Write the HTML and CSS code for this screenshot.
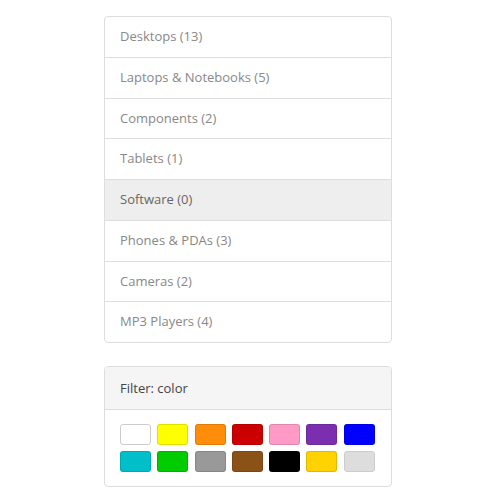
FILE: index.html
```html
<!DOCTYPE html>
<html lang="en">
<head>
    <meta charset="UTF-8">
    <meta name="viewport" content="width=device-width, initial-scale=1.0">
    <title>Categories</title>
    <link rel="stylesheet" href="styles.css">
</head>
<body>
    <div class="sidebar">
        <!-- categories -->
        <div class="list-group">
            <a href="#" class="list-group-item">Desktops (13)</a>
            <a href="#" class="list-group-item">Laptops &amp; Notebooks (5)</a>
            <a href="#" class="list-group-item">Components (2)</a>
            <a href="#" class="list-group-item">Tablets (1)</a>
            <a href="#" class="list-group-item active">Software (0)</a>
            <a href="#" class="list-group-item">Phones &amp; PDAs (3)</a>
            <a href="#" class="list-group-item">Cameras (2)</a>
            <a href="#" class="list-group-item">MP3 Players (4)</a>
        </div>

        <!-- color filter -->
        <div class="panel">
            <div class="panel-heading">Filter: color</div>
            <div class="panel-body">
                <div class="swatches">
                    <span class="swatch white" title="White"></span>
                    <span class="swatch yellow" title="Yellow"></span>
                    <span class="swatch orange" title="Orange"></span>
                    <span class="swatch red" title="Red"></span>
                    <span class="swatch pink" title="Pink"></span>
                    <span class="swatch purple" title="Purple"></span>
                    <span class="swatch blue" title="Blue"></span>
                    <span class="swatch cyan" title="Cyan"></span>
                    <span class="swatch green" title="Green"></span>
                    <span class="swatch gray" title="Gray"></span>
                    <span class="swatch brown" title="Brown"></span>
                    <span class="swatch black" title="Black"></span>
                    <span class="swatch gold" title="Gold"></span>
                    <span class="swatch silver" title="Silver"></span>
                </div>
            </div>
        </div>
    </div>
</body>
</html>
```

FILE: styles.css
```css
body { font-family: "Open Sans", "Liberation Sans", sans-serif; font-size: 13px; margin: 0; background-color: #fff; }
.sidebar { width: 288px; margin: 16px 0 0 104px; }
.list-group { border: 1px solid #ddd; border-radius: 4px; margin-bottom: 23px; overflow: hidden; }
.list-group-item { display: block; padding: 10px 15px; line-height: 19.75px; color: #888; text-decoration: none; border-top: 1px solid #ddd; }
.list-group-item:first-child { border-top: none; }
.list-group-item.active { background-color: #eee; color: #666; }
.panel { border: 1px solid #ddd; border-radius: 4px; overflow: hidden; }
.panel-heading { background-color: #f5f5f5; color: #444; padding: 11px 15px; line-height: 20px; border-bottom: 1px solid #ddd; }
.panel-body { padding: 14px 15px; }
.swatches { display: grid; grid-template-columns: repeat(7, 31px); gap: 6px; column-gap: 6.3px; }
.swatch { display: block; height: 21px; border-radius: 3px; box-sizing: border-box; border: 1px solid rgba(0, 0, 0, 0.12); }
.white { background-color: #fff; border-color: #ccc; }
.yellow { background-color: #ffff00; }
.orange { background-color: #ff8c0a; }
.red { background-color: #cc0000; }
.pink { background-color: #ff9ac6; }
.purple { background-color: #7b2fb0; }
.blue { background-color: #0000ff; }
.cyan { background-color: #00bfc9; }
.green { background-color: #00cc00; }
.gray { background-color: #999; }
.brown { background-color: #8b5218; }
.black { background-color: #000; }
.gold { background-color: #ffd200; }
.silver { background-color: #ddd; border-color: #ccc; }
```
